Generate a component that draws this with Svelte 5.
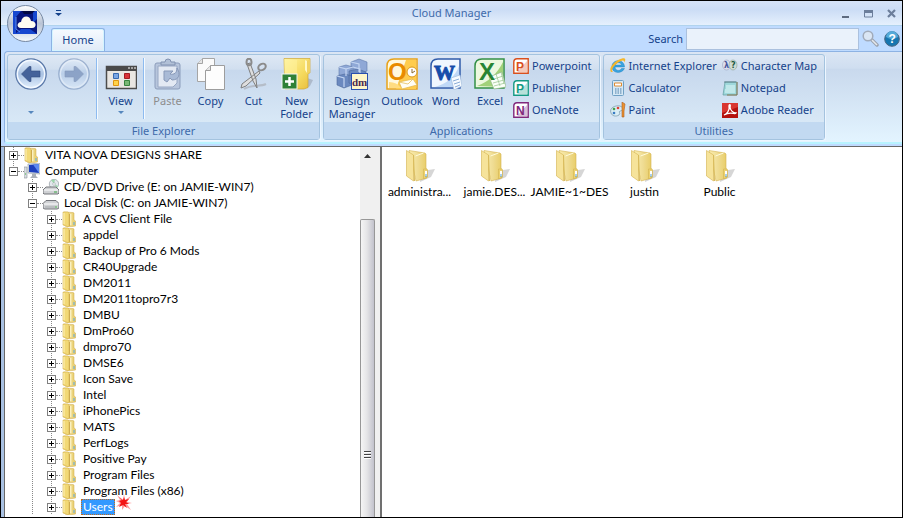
<script lang="ts">
    type Row = { level: number; name: string; icon: string; open?: boolean; last?: boolean };

    const folders = [
        'A CVS Client File', 'appdel', 'Backup of Pro 6 Mods', 'CR40Upgrade', 'DM2011',
        'DM2011topro7r3', 'DMBU', 'DmPro60', 'dmpro70', 'DMSE6', 'Icon Save', 'Intel',
        'iPhonePics', 'MATS', 'PerfLogs', 'Positive Pay', 'Program Files',
        'Program Files (x86)', 'Users'
    ];

    const rows: Row[] = [
        { level: 0, name: 'VITA NOVA DESIGNS SHARE', icon: 'folder' },
        { level: 0, name: 'Computer', icon: 'computer', open: true, last: true },
        { level: 1, name: 'CD/DVD Drive (E: on JAMIE-WIN7)', icon: 'cd' },
        { level: 1, name: 'Local Disk (C: on JAMIE-WIN7)', icon: 'disk', open: true },
        ...folders.map((name) => ({ level: 2, name, icon: 'folder' }))
    ];

    const files = ['administra...', 'jamie.DES...', 'JAMIE~1~DES', 'justin', 'Public'];

    const office = [
        { name: 'Powerpoint', letter: 'P', color: '#d9501e' },
        { name: 'Publisher', letter: 'P', color: '#159a84' },
        { name: 'OneNote', letter: 'N', color: '#80287c' }
    ];

    const utilities = [
        ['Internet Explorer', 'ie'], ['Character Map', 'charmap'],
        ['Calculator', 'calc'], ['Notepad', 'notepad'],
        ['Paint', 'paint'], ['Adobe Reader', 'adobe']
    ];

    let selected = $state('Users');
    let query = $state('');
</script>

{#snippet big(name: string)}
    <svg width="32" height="32" viewBox="0 0 32 32" aria-hidden="true">
        {#if name === 'back' || name === 'forward'}
            <g opacity={name === 'back' ? 1 : 0.45}>
                <circle cx="16" cy="16" r="15.2" fill="url(#glass)" stroke="#5a78a8" stroke-width="1.2" />
                <circle cx="16" cy="16" r="13.6" fill="none" stroke="#f4f9ff" stroke-width="1.4" />
                <path d={name === 'back' ? 'M6.500 16 14 8.500h2v4.500h9v6h-9v4.500h-2z' : 'M25.500 16 18 8.500h-2v4.500H7v6h9v4.500h2z'} fill="#44629a" stroke="#344f80" stroke-width=".6" />
            </g>
        {:else if name === 'view'}
            <rect x="1.5" y="8.500" width="30" height="22" fill="#e9e6e2" stroke="#4c4c4c" stroke-width="1.5" />
            <path d="M1 8h31v5H1z" fill="#4a4a4a" />
            <path d="M23 10h2m1 0h2m1 0h2" stroke="#fff" />
            <path d="M8.500 15.500h5v5h-5z" fill="#79a5e4" stroke="#3769b0" />
            <path d="M19.500 15.500h5v5h-5z" fill="#d83238" stroke="#a51a20" />
            <path d="M8.500 22.500h5v5h-5z" fill="#ffd34a" stroke="#e09711" />
            <path d="M19.500 22.500h5v5h-5z" fill="#79b875" stroke="#398440" />
        {:else if name === 'paste'}
            <rect x="3" y="5" width="25" height="26" rx="2" fill="#b7c5dc" stroke="#8c9dbb" />
            <path d="M6 8h19v17l-4 4H6z" fill="#e3e9f3" stroke="#98a8c4" />
            <path d="M9 7V4h4a3 3 0 0 1 6 0h4v3z" fill="#b1c0d7" stroke="#8192b1" />
            <path d="M12 22v-9h9l-3 3c4 1 7-1 7-6 4 6 2 12-5 12l-2-2-3 4z" fill="#a9bad6" stroke="#8798b8" />
        {:else if name === 'copy'}
            <path d="M7.500 .500h12v23h-17v-18z" fill="#fbfbfb" stroke="#a5a5a5" />
            <path d="M7.500 .500v5h-5" fill="#e6e6e6" stroke="#a5a5a5" />
            <path d="M15.500 7.500h14v24h-19v-19z" fill="#fdfdfd" stroke="#9d9d9d" />
            <path d="M15.500 7.500v5h-5" fill="#e6e6e6" stroke="#9d9d9d" />
        {:else if name === 'cut'}
            <path d="M6 31c8-5 16-2 22-5" stroke="#b5bdc8" stroke-width="2" fill="none" />
            <path d="M9 6l6 17 4 7-1-9-6-16zM21 13 4 26l-1 4 5-2 14-13z" fill="#dedede" stroke="#7e7e7e" />
            <ellipse cx="11" cy="4" rx="2.500" ry="3.300" fill="none" stroke="#8b8b8b" stroke-width="2" />
            <ellipse cx="24" cy="9" rx="4" ry="3" transform="rotate(-30 24 9)" fill="none" stroke="#8b8b8b" stroke-width="2" />
        {:else if name === 'newfolder'}
            <path d="M26 20l6 2-3 6-3 2h-3z" fill="#8f98a5" opacity=".5" />
            <path d="M3 .5h26v14l-2 2v13l-4 1.500H4z" fill="url(#yellow)" stroke="#d0a736" stroke-width=".7" />
            <path d="M3 1l13 1v28H4z" fill="#fff3a0" opacity=".5" />
            <path d="M24 2v10l2 3v-12z" fill="#fff8c4" />
            <path d="M26 3l3-2v13l-3 2z" fill="#f0d263" />
            <rect x="1" y="16" width="15" height="15" fill="#2f8137" stroke="#f1f5f1" />
            <path d="M8.500 19v9M4 23.500h9" stroke="#fff" stroke-width="2.500" />
        {:else if name === 'dm'}
            <path d="M3 9l7-2 7 2v8l-7 2-7-2zM15 4l8-3 8 3v9l-8 3-8-3z" fill="#8fa8d6" stroke="#5f7aac" stroke-width=".6" />
            <path d="M1 18l8-2 7 2v9l-8 3-7-3zM13 13l9-2 8 3v12l-8 3-9-4z" fill="#6b89bf" stroke="#4d689a" stroke-width=".6" />
            <path d="M10 18v-7l7-2 7 2v9M3 9l7 2v7M15 4l8 2v8M1 18l7 2v9" fill="none" stroke="#c3d5f2" stroke-width="1.2" />
            <rect x="15.500" y="15.500" width="16" height="16" fill="#fff6c8" stroke="#2a4faf" />
            <text x="16" y="28" class="dm-text">dm</text>
        {:else if name === 'outlook'}
            <path d="M8 1h23v30H1V8q0-7 7-7z" fill="#fff8df" stroke="#e8a21a" stroke-width="1.500" />
            <path d="M20 2h10v29H10z" fill="#ffcc4d" />
            <path d="M3 24q8 0 12 6H3z" fill="#ffdc82" />
            <text x="2" y="22" class="letter" fill="#e98b00">O</text>
            <circle cx="26" cy="14" r="5" fill="#fff" stroke="#da981b" />
            <path d="M26 11v4l3-2" stroke="#8b6a30" fill="none" />
            <path d="M13 24l14-3 4 6-15 4z" fill="#fffdf4" stroke="#e3b64a" stroke-width=".7" />
            <path d="M13 24l9 2 5-5" fill="none" stroke="#e3b64a" stroke-width=".7" />
        {:else if name === 'word'}
            <path d="M8 1h22v29H1V8q0-7 7-7z" fill="#f0f7ff" stroke="#315caa" stroke-width="1.500" />
            <path d="M5 29Q23 24 29 8v21z" fill="#c0d9f7" />
            <text x="4" y="22" class="letter w" fill="#154caa">W</text>
            <path d="M21 20l9-3 2 11-8 4z" fill="#f7fbff" stroke="#a5bedd" stroke-width=".7" />
            <path d="M23 23l6-2m-5 5 6-2m-5 5 5-2" stroke="#8badd6" />
        {:else if name === 'excel'}
            <path d="M8 1h22v29H1V8q0-7 7-7z" fill="#edf8df" stroke="#349047" stroke-width="1.500" />
            <path d="M3 28Q20 22 29 4v25z" fill="#a2d17a" />
            <path d="M15 19l13-5 4 15-12 2z" fill="#fbfff8" stroke="#87b27d" stroke-width=".6" />
            <path d="M17 22l12-4m-10 7 11-3m-10 6 11-3m-9-9 4 12m1-14 3 12" stroke="#9fc997" stroke-width=".8" />
            <text x="5" y="22" class="letter" fill="#278434">X</text>
        {/if}
    </svg>
{/snippet}

{#snippet small(name: string)}
    <svg width="16" height="16" viewBox="0 0 16 16" aria-hidden="true">
        {#if name === 'folder'}
            <path d="M2 1l9 .5 1 .5v7l1.500 1v5L7 16l-4-1z" fill="url(#gold)" stroke="#cfa94a" stroke-width=".5" />
            <path d="M1 1h5l1 1v14l-6-2z" fill="#f2d976" stroke="#d5b253" stroke-width=".6" />
            <path d="M2 2v11" stroke="#fdf2bb" />
            <path d="M7.500 3v12" stroke="#c8a141" stroke-width=".8" />
            <path d="M8.800 3v11" stroke="#fffad8" />
            <path d="M12 11v3" stroke="#5aa9e6" />
        {:else if name === 'computer'}
            <path d="M0 4h3v11H0z" fill="#d8dde2" stroke="#8b9298" stroke-width=".6" />
            <path d="M4 1l12-1v11L4 10z" fill="#dce2e8" stroke="#8793a0" stroke-width=".6" />
            <path d="M5 2l10-1v9L5 9z" fill="#1c3fbd" />
            <path d="M9 1.500l6-.5v9z" fill="#5d8af0" />
            <path d="M8 11h4v2l2 2H6l2-2z" fill="#aab0b8" />
            <path d="M1 11h1" stroke="#45b840" />
        {:else if name === 'cd'}
            <circle cx="11" cy="5" r="4.700" fill="#e3e9ec" stroke="#929ba2" stroke-width=".7" />
            <path d="M11 5 8 1l4-.5zM11 5l4 2-1 2z" fill="#9bd6aa" />
            <circle cx="11" cy="5" r="1.300" fill="#fff" stroke="#8b949b" stroke-width=".5" />
            <path d="M3 8h10l3 3v3l-1 1H1l-1-1v-3z" fill="#cfd1d4" stroke="#66696e" stroke-width=".9" />
            <path d="M1 11h14" stroke="#fff" />
            <path d="M11 13h3" stroke="#3fa948" />
        {:else if name === 'disk'}
            <path d="M3 5.500h10l3 3v3.500q0 2-2 2H2q-2 0-2-2V8.500z" fill="#cfd1d4" stroke="#66696e" stroke-width=".9" />
            <path d="M1 9h14" stroke="#fff" />
            <path d="M2 12h10" stroke="#a4a8ab" />
            <path d="M12 12h2" stroke="#4cb74c" />
        {:else if name === 'ie'}
            <path d="M14.500 9H5c.2 4 5 4.500 6.500 1.500h3C12 16 2 16 2 8.500 2 1 14.500.5 14.500 9zM5 7h6.500C11 4 6 4 5 7z" fill="#39a4df" stroke="#1679bd" stroke-width=".4" />
            <path d="M1 14C-2 10 5 2 12 .5c4-1 4 2 2 4 .5-2-1-3-4-1C5 6 0 12 3 14z" fill="#f5b62a" />
        {:else if name === 'calc'}
            <rect x="2.500" y=".5" width="11" height="15" rx="1" fill="#d5e8f5" stroke="#6fa0c4" />
            <path d="M4.500 3h7v3h-7z" fill="#fff" stroke="#df8c32" />
            <path d="M5 9h7m-7 2h7m-7 2h7" stroke="#4b7ca8" stroke-dasharray="1.5 1" />
        {:else if name === 'paint'}
            <path d="M1 11C-1 6 5 3 10 4c5 2 2 5 0 5-2 1 1 2-1 4-3 2-7 1-8-2z" fill="#d9edf5" stroke="#7293a4" stroke-width=".7" />
            <circle cx="4" cy="7" r="1.300" fill="#45a04b" />
            <circle cx="8" cy="6" r="1.300" fill="#db4338" />
            <circle cx="4" cy="11" r="1.300" fill="#377cc4" />
            <path d="M12 0l3 2-1 7v6h-2V9z" fill="#ed922d" stroke="#a95f27" stroke-width=".6" />
        {:else if name === 'charmap'}
            <ellipse cx="4.500" cy="7" rx="4" ry="5" fill="#dce0ee" stroke="#9ea8c1" stroke-width=".6" />
            <ellipse cx="11" cy="7" rx="4" ry="5" fill="#d0dcd4" stroke="#8ba397" stroke-width=".6" />
            <text x="2" y="10" class="tiny" fill="#45569b">λ</text>
            <text x="9" y="10" class="tiny" fill="#235b42">?</text>
        {:else if name === 'notepad'}
            <path d="M3 2h12v13H1z" fill="#9ed8db" stroke="#619b9f" stroke-width=".7" />
            <path d="M15 2v13H5" fill="none" stroke="#8a7b52" />
            <path d="M3 1v2m2-2v2m2-2v2m2-2v2m2-2v2m2-2v2" stroke="#55767e" stroke-width=".8" />
            <path d="M4 6h9M4 8h9M3 10h10M3 12h10" stroke="#e2f8f9" />
        {:else if name === 'adobe'}
            <path d="M0 1h16v15H0z" fill="#b5120f" />
            <path d="M0 1h16v4L0 11z" fill="#d93630" />
            <path d="M2 13c3-1 6-5 5-9 0-2 2-2 1 1 0 3 3 6 6 6-1 2-5-2-12 2z" fill="none" stroke="#fff" stroke-width="1.300" />
        {/if}
    </svg>
{/snippet}

{#snippet command(name: string, icon: string, disabled = false)}
    <button class="command" {disabled}>
        {@render big(icon)}
        <span>{name}</span>
        {#if icon === 'view'}<i class="arrow"></i>{/if}
    </button>
{/snippet}

<svg class="defs" width="0" height="0" aria-hidden="true">
    <defs>
        <linearGradient id="glass" x2="0" y2="1"><stop stop-color="#e9f2fd" /><stop offset=".5" stop-color="#a9c2e3" /><stop offset="1" stop-color="#e5f2ff" /></linearGradient>
        <linearGradient id="gold" x2="1"><stop stop-color="#fbeeb0" /><stop offset=".5" stop-color="#efdc93" /><stop offset="1" stop-color="#e8cc64" /></linearGradient>
        <linearGradient id="yellow" x2="1" y2="1"><stop stop-color="#fff4a4" /><stop offset=".6" stop-color="#f5da5e" /><stop offset="1" stop-color="#e8bd3c" /></linearGradient>
        <linearGradient id="orb" x2="0" y2="1"><stop stop-color="#fff" /><stop offset=".5" stop-color="#b8c3d5" /><stop offset="1" stop-color="#f5faff" /></linearGradient>
    </defs>
</svg>

<div class="window">
    <header class="titlebar">
        <button class="orb" aria-label="Application menu">
            <svg width="38" height="38" viewBox="0 0 38 38">
                <circle cx="18.500" cy="18.500" r="18" fill="url(#orb)" stroke="#7588a3" />
                <rect x="6" y="6" width="24" height="23" fill="#08167f" />
                <path d="M6 6h8l-5 6v17H6zM30 6v8l-4 4V6zM8 29l6-5h9l7 5z" fill="#1748d0" />
                <path d="M15 6h13l-4 3H17z" fill="#030a43" />
                <path d="M9 12v12l4 3" stroke="#5a8cf0" fill="none" />
                <path d="M15 23c-5 0-4-6 0-6 1-7 9-7 10-1 6 0 6 7 1 7z" transform="translate(-1 0)" fill="#fffdf2" />
            </svg>
        </button>
        <button class="quick" aria-label="Customize toolbar">
            <svg width="7" height="6" viewBox="0 0 7 6"><path d="M1 0h5v1H1zM0 3h7L3.500 6z" fill="#15428b" /></svg>
        </button>
        <h1>Cloud Manager</h1>
        <div class="controls">
            <button aria-label="Minimize"><svg width="9" height="9"><path d="M1 7h7v2H1z" fill="#5e6b80" /></svg></button>
            <button aria-label="Maximize"><svg width="9" height="9"><path d="M.5 2h8v6h-8z" fill="none" stroke="#6c7e9b" /><path d="M0 1h9v3H0z" fill="#6c7e9b" /></svg></button>
            <button aria-label="Close"><svg width="9" height="9"><path d="M1 1l7 7m0-7L1 8" stroke="#6c7e9b" stroke-width="2.200" /></svg></button>
        </div>
    </header>

    <nav class="tabs">
        <button class="tab">Home</button>
        <label for="search">Search</label>
        <input id="search" type="text" bind:value={query} autocomplete="off" />
        <button class="tool" aria-label="Find">
            <svg width="17" height="17" viewBox="0 0 17 17"><path d="M9 9l6 6" stroke="#9ba3af" stroke-width="3.500" stroke-linecap="round" /><path d="M10 10l5 5" stroke="#e5e8ec" stroke-width="1.500" /><circle cx="6" cy="6" r="4.800" fill="#dae6f4" stroke="#a1abba" stroke-width="1.500" /></svg>
        </button>
        <button class="tool" aria-label="Help">
            <svg width="16" height="16" viewBox="0 0 16 16"><circle cx="8" cy="8" r="7.300" fill="#1676b0" stroke="#4c6680" /><path d="M2 6a6 6 0 0 1 12 0q-6 4-12 0z" fill="#54aada" /><text x="4.500" y="12" class="help">?</text></svg>
        </button>
    </nav>

    <div class="ribbon">
        <section class="group">
            <div class="commands">
                <button class="command" aria-label="Back">{@render big('back')}<i class="arrow"></i></button>
                <button class="command" aria-label="Forward">{@render big('forward')}</button>
                <i class="separator"></i>
                {@render command('View', 'view')}
                <i class="separator"></i>
                {@render command('Paste', 'paste', true)}
                {@render command('Copy', 'copy')}
                {@render command('Cut', 'cut')}
                {@render command('New Folder', 'newfolder')}
            </div>
            <h2>File Explorer</h2>
        </section>
        <section class="group">
            <div class="commands wide">
                {@render command('Design Manager', 'dm')}
                {@render command('Outlook', 'outlook')}
                {@render command('Word', 'word')}
                {@render command('Excel', 'excel')}
                <div class="stack">
                    {#each office as app}
                        <button class="mini">
                            <svg width="16" height="16" viewBox="0 0 16 16" aria-hidden="true">
                                <path d="M4 .8h11.200v14.400H.8V4Q.8.8 4 .8z" fill="#fff" stroke={app.color} stroke-width="1.400" />
                                <path d="M14 3v11H4z" fill={app.color} opacity=".3" />
                                <text x="3" y="13" class="office" fill={app.color}>{app.letter}</text>
                            </svg>
                            {app.name}
                        </button>
                    {/each}
                </div>
            </div>
            <h2>Applications</h2>
        </section>
        <section class="group">
            <div class="commands wide">
                <div class="stack two">
                    {#each utilities as [name, icon]}
                        <button class="mini">{@render small(icon)}{name}</button>
                    {/each}
                </div>
            </div>
            <h2>Utilities</h2>
        </section>
    </div>

    <main>
        <div class="tree-pane">
            <div class="tree">
                {#each rows as row}
                    <div class="row">
                        {#each Array(row.level) as _, i}
                            <i class="guide" class:dots={i === 1}></i>
                        {/each}
                        <span class="joint" class:last={row.last}>
                            <button class="toggle" class:open={row.open} aria-label="Toggle {row.name}"></button>
                        </span>
                        {@render small(row.icon)}
                        <button class="name" class:selected={selected === row.name} onclick={() => (selected = row.name)}>{row.name}</button>
                        {#if row.name === 'Users'}
                            <svg class="spark" width="18" height="18" viewBox="0 0 18 18" aria-hidden="true">
                                <path d="M2 1l6 5 1-6 1 6 6-4-4 6 5 1-5 1 4 6-6-4-3 4 0-5-6 2 4-4-4-2 4-1z" fill="#ff9a9a" />
                                <path d="M4 3l4 3 1-3 1 3 4-1-3 3 3 2-4 0 2 4-4-3-4 2 2-4-2-2 3-1z" fill="#f21515" />
                            </svg>
                        {/if}
                    </div>
                {/each}
            </div>
            <div class="scrollbar">
                <button class="up" aria-label="Scroll up">
                    <svg width="7" height="4" viewBox="0 0 7 4"><path d="M3.500 0 7 4H0z" fill="#333" /></svg>
                </button>
                <div class="thumb"><i></i><i></i><i></i></div>
            </div>
        </div>
        <div class="files">
            {#each files as file}
                <button class="file">
                    <svg width="32" height="34" viewBox="0 0 32 34" aria-hidden="true">
                        <path d="M17 22l14-2-4 8-11 5z" fill="#8a8a8a" opacity=".35" />
                        <path d="M5 1.500l16 2.500 1 1v14l1 2v8l-11 3z" fill="url(#gold)" stroke="#d5b452" stroke-width=".6" />
                        <path d="M2.500 1.500l7 4.500v26l-7-5z" fill="#f6e39a" stroke="#d3b14e" stroke-width=".6" />
                        <path d="M9.500 6l1 26" stroke="#d9bb5b" />
                        <path d="M11.500 7l8-3" stroke="#fffbdc" />
                        <path d="M19.500 20h3q1 0 1 1v7l-4 2z" fill="#ecd170" stroke="#cfae4d" stroke-width=".5" />
                        <path d="M22 22v5" stroke="#fff" stroke-width="2" />
                        <path d="M22 25v3" stroke="#539fd8" />
                    </svg>
                    {file}
                </button>
            {/each}
        </div>
    </main>
</div>

<style>
    :global(body) {
        margin: 0;
    }

    .window {
        box-sizing: border-box;
        display: flex;
        flex-direction: column;
        min-height: 100vh;
        border: 1px solid #000;
        background: #bfdbff;
        color: #15428b;
        font: 11px/14px "Noto Sans", sans-serif;
    }

    .defs {
        position: absolute;
    }

    button {
        padding: 0;
        border: 0;
        background: none;
        color: inherit;
        font: inherit;
    }

    svg {
        display: block;
        flex: none;
    }

    h1, h2 {
        margin: 0;
        font: inherit;
        text-align: center;
    }

    .titlebar {
        position: relative;
        display: flex;
        align-items: center;
        height: 24px;
        flex: none;
        border-bottom: 1px solid #b0d3ee;
        background: linear-gradient(#d5e2f7, #cbdcf5 35%, #e5f0fd);
    }

    .orb {
        position: absolute;
        top: 4px;
        left: 6px;
        z-index: 2;
    }

    .quick {
        margin-left: 54px;
    }

    h1 {
        flex: 1;
        color: #3e6aaa;
    }

    .controls {
        display: flex;
        gap: 14px;
        padding-right: 6px;
    }

    .tabs {
        display: flex;
        align-items: center;
        height: 25px;
        flex: none;
    }

    .tab {
        align-self: flex-end;
        box-sizing: border-box;
        width: 54px;
        height: 23px;
        margin: 0 auto 0 50px;
        border: 1px solid #8db2e3;
        border-bottom: 0;
        border-radius: 3px 3px 0 0;
        background: linear-gradient(#f6faff, #e0eaf7);
        box-shadow: inset 0 0 0 1px #d4f4ff;
    }

    .tabs input {
        box-sizing: border-box;
        width: 173px;
        height: 22px;
        margin: 0 3px;
        padding: 0 4px;
        border: 1px solid #abc1de;
        background: #eaf2fb;
        font: inherit;
        outline: none;
    }

    .tool {
        margin-right: 5px;
    }

    .tool:last-child {
        margin-right: 2px;
    }

    .ribbon {
        display: flex;
        flex: none;
        gap: 3px;
        margin-left: 3px;
        padding: 2px;
        border: 1px solid #8db2e3;
        border-bottom: 2px solid #b8f3ff;
        border-right: 0;
        border-radius: 4px 0 0 4px;
        background: linear-gradient(#dbe6f4, #cfdef0 18%, #c9d9ed 19%, #e3f4ff);
    }

    .group {
        display: flex;
        flex-direction: column;
        border: 1px solid #a4c3df;
        border-radius: 3px;
        background: linear-gradient(#dee8f5, #d1dfef 17%, #c7d8ed 18%, #d8e8f6 80%);
        box-shadow: 1px 1px 0 #edf6ff;
    }

    .commands {
        display: flex;
        height: 67px;
        padding: 0 1px;
    }

    .wide {
        padding: 0 7px 0 0;
    }

    .command {
        display: flex;
        flex-direction: column;
        align-items: center;
        width: 43px;
        padding-top: 3px;
        line-height: 13px;
    }

    .wide .command {
        width: 44px;
    }

    .wide .command:first-child {
        width: 56px;
        padding-left: 4px;
        padding-right: 4px;
    }

    .command span {
        margin-top: 4px;
    }

    .command:disabled {
        color: #8d8d8d;
    }

    .arrow {
        margin-top: 4px;
        border: 3px solid transparent;
        border-top-color: #5687bd;
        border-bottom: 0;
    }

    .command svg + .arrow {
        margin-top: 21px;
    }

    .separator {
        width: 1px;
        height: 61px;
        margin: 3px 2px 0 1px;
        background: #8dbbf0;
        box-shadow: 1px 0 0 #f4faff;
    }

    h2 {
        height: 17px;
        background: #c2d9f1;
        color: #3e6aaa;
        line-height: 18px;
    }

    .stack {
        display: grid;
        grid-auto-rows: 22px;
        padding-left: 1px;
    }

    .two {
        grid-template-columns: auto auto;
        column-gap: 5px;
        padding-left: 6px;
    }

    .mini {
        display: flex;
        align-items: center;
        gap: 3px;
        white-space: nowrap;
    }

    .letter {
        font: bold 24px "Liberation Sans", sans-serif;
    }

    .w {
        font: bold 21px "Liberation Serif", serif;
        stroke: #154caa;
    }

    .dm-text {
        font: bold 11px "Liberation Serif", serif;
        fill: #4b2850;
    }

    .office {
        font: bold 12px "Liberation Sans", sans-serif;
    }

    .tiny {
        font: bold 8px "DejaVu Sans", sans-serif;
    }

    .help {
        font: bold 12px "Liberation Sans", sans-serif;
        fill: #fff;
    }

    main {
        display: flex;
        flex: 1;
        margin-top: 2px;
        padding-left: 3px;
        border-top: 1px solid #696969;
        background: #a9c1e2;
        color: #000;
        font: 12px/16px Lato, sans-serif;
    }

    .tree-pane {
        display: flex;
        flex: none;
        width: 375px;
        border-left: 1px solid #696969;
        background: #fff;
    }

    .tree {
        flex: 1;
        min-width: 0;
    }

    .row {
        display: flex;
        align-items: center;
        height: 16px;
    }

    .guide, .joint {
        flex: none;
        width: 19px;
        height: 16px;
    }

    .joint {
        box-sizing: border-box;
        display: flex;
        align-items: center;
        padding-left: 4px;
    }

    .dots, .joint {
        background: repeating-linear-gradient(#888 0 1px, #fff 1px 2px) 8px 0 / 1px 100% no-repeat;
    }

    .joint.last {
        background-size: 1px 50%;
    }

    .joint::after {
        content: "";
        width: 6px;
        border-top: 1px dotted #888;
    }

    .toggle {
        width: 9px;
        height: 9px;
        flex: none;
        border: 1px solid #808080;
        background:
            linear-gradient(#000, #000) center / 5px 1px no-repeat,
            linear-gradient(#000, #000) center / 1px 5px no-repeat,
            #fff;
    }

    .toggle.open {
        background: linear-gradient(#000, #000) center / 5px 1px no-repeat, #fff;
    }

    .name {
        height: 16px;
        margin-left: 3px;
        padding: 0 2px;
        white-space: nowrap;
    }

    .selected {
        outline: 1px dotted #c66a18;
        outline-offset: -1px;
        background: #3399ff;
        color: #fff;
    }

    .spark {
        margin-top: -8px;
    }

    .scrollbar {
        display: flex;
        flex-direction: column;
        width: 15px;
        margin-right: 5px;
        background: #f0f0f0;
        box-shadow: 5px 0 0 #f0f0f0;
    }

    .up {
        display: grid;
        place-items: center;
        height: 17px;
        margin-bottom: 55px;
    }

    .thumb {
        display: flex;
        flex: 1;
        flex-direction: column;
        align-items: center;
        justify-content: center;
        gap: 1px;
        padding-top: 172px;
        border: 1px solid #979797;
        border-bottom: 0;
        border-radius: 2px 2px 0 0;
        background: linear-gradient(90deg, #f5f5f5, #e5e5e7 45%, #c2c2cc);
    }

    .thumb i {
        width: 7px;
        height: 2px;
        background: linear-gradient(#444 50%, #fff 50%);
    }

    .files {
        display: flex;
        flex: 1;
        flex-wrap: wrap;
        align-content: flex-start;
        border-left: 2px solid #707070;
        background: #fff;
    }

    .file {
        display: flex;
        flex-direction: column;
        align-items: center;
        gap: 1px;
        width: 75px;
        padding-top: 2px;
    }
</style>
